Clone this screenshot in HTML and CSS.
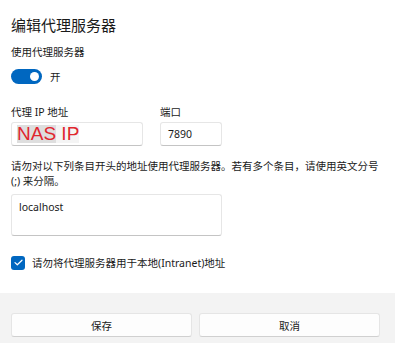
FILE: index.html
```html
<!DOCTYPE html>
<html>
<head>
    <meta charset="UTF-8">
    <title>编辑代理服务器</title>
    <link rel="stylesheet" href="styles.css">
</head>
<body>
    <div class="dialog">
        <div class="content">
            <h1 class="title">编辑代理服务器</h1>
            <p class="label">使用代理服务器</p>
            <div class="toggle-row">
                <span class="toggle"><span class="knob"></span></span>
                <span class="toggle-text">开</span>
            </div>

            <div class="fields">
                <div class="field field-address">
                    <p class="label">代理 IP 地址</p>
                    <div class="input"><span class="mark">NAS</span><span class="mark-light"> IP</span></div>
                </div>
                <div class="field field-port">
                    <p class="label">端口</p>
                    <div class="input input-port">7890</div>
                </div>
            </div>

            <p class="note">请勿对以下列条目开头的地址使用代理服务器。若有多个条目，请使用英文分号 (;) 来分隔。</p>
            <div class="textarea">localhost</div>

            <div class="check-row">
                <span class="checkbox">
                    <svg width="9" height="7" viewBox="0 0 9 7">
                        <path d="M1 3.6 L3.3 5.8 L8 1.2" fill="none" stroke="#fff" stroke-width="1.2" stroke-linecap="round" stroke-linejoin="round"/>
                    </svg>
                </span>
                <span class="check-text">请勿将代理服务器用于本地(Intranet)地址</span>
            </div>
        </div>

        <div class="footer">
            <button class="btn">保存</button>
            <button class="btn">取消</button>
        </div>
    </div>
</body>
</html>
```

FILE: styles.css
```css
body {
    margin: 0;
    background-color: #fff;
    font-family: "Noto Sans", "Noto Sans CJK SC", sans-serif;
    color: #1a1a1a;
}

.dialog {
    width: 395px;
    height: 343px;
    display: flex;
    flex-direction: column;
}

.content {
    flex: 1;
    padding: 15px 15px 0 11px;
}

.title {
    font-size: 15px;
    font-weight: normal;
    line-height: 20px;
    margin: 0;
}

.label {
    font-size: 10.5px;
    line-height: 15px;
    margin: 10px 0 0 0;
}

.toggle-row {
    display: flex;
    align-items: center;
    margin-top: 9px;
    height: 15px;
}

.toggle {
    width: 31px;
    height: 15px;
    border-radius: 8px;
    background-color: #0067c0;
    display: flex;
    align-items: center;
    justify-content: flex-end;
    padding-right: 3px;
    box-sizing: border-box;
}

.knob {
    width: 9px;
    height: 9px;
    border-radius: 50%;
    background-color: #fff;
}

.toggle-text {
    font-size: 10.5px;
    margin-left: 8px;
}

.fields {
    display: flex;
    gap: 17px;
    margin-top: 21px;
}

.fields .label {
    margin: 0 0 2px 0;
}

.input {
    height: 24px;
    box-sizing: border-box;
    background-color: #fff;
    border: 1px solid #e6e6e6;
    border-bottom-color: #c4c4c4;
    border-radius: 3px;
    display: flex;
    align-items: center;
    font-size: 10.5px;
    padding-left: 7px;
}

.field-address .input {
    width: 132px;
    padding-left: 5px;
}

.input-port {
    width: 62px;
}

.mark {
    font-family: "Liberation Sans", Arial, sans-serif;
    font-size: 19px;
    line-height: 18px;
    color: #e0262e;
    background-color: #dedede;
}

.mark-light {
    font-family: "Liberation Sans", Arial, sans-serif;
    font-size: 19px;
    line-height: 18px;
    color: #e0262e;
    background-color: #f4f4f4;
    white-space: pre;
}

.note {
    font-size: 10.5px;
    line-height: 15px;
    margin: 13px 0 0 0;
}

.textarea {
    width: 211px;
    height: 42px;
    box-sizing: border-box;
    margin-top: 5px;
    border: 1px solid #e6e6e6;
    border-bottom-color: #c4c4c4;
    border-radius: 3px;
    font-size: 10.5px;
    padding: 5px 7px;
}

.check-row {
    display: flex;
    align-items: center;
    margin-top: 19px;
}

.checkbox {
    width: 14px;
    height: 14px;
    border-radius: 3px;
    background-color: #0067c0;
    display: flex;
    align-items: center;
    justify-content: center;
}

.check-text {
    font-size: 10.5px;
    margin-left: 7px;
}

.footer {
    height: 50px;
    box-sizing: border-box;
    background-color: #f3f3f3;
    padding: 20px 15px 0 11px;
    display: flex;
    gap: 7px;
}

.btn {
    flex: 1;
    height: 24px;
    background-color: #fdfdfd;
    border: 1px solid #e5e5e5;
    border-bottom-color: #d0d0d0;
    border-radius: 3px;
    font-family: "Noto Sans", "Noto Sans CJK SC", sans-serif;
    font-size: 10.5px;
    color: #1a1a1a;
}
```
